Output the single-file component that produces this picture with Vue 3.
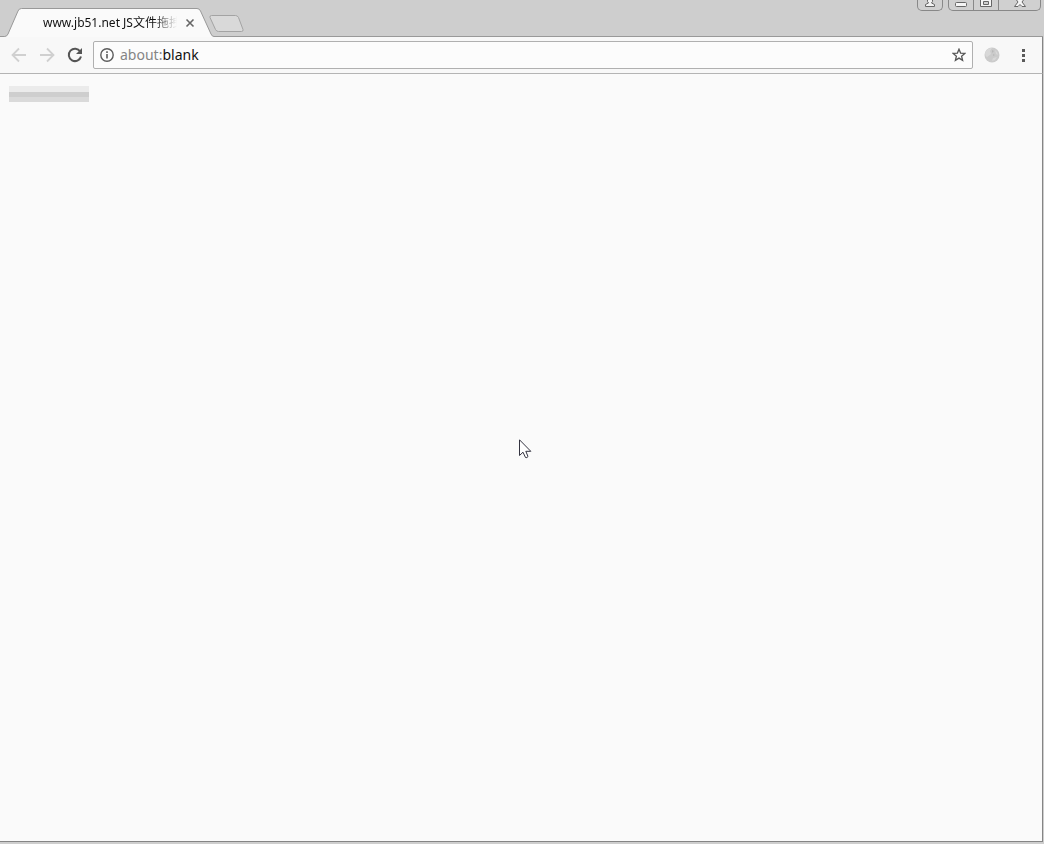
<script setup>
import { ref } from 'vue'
const address = ref('about:blank')
</script>

<template>
  <div class="desktop">
    <div class="window">
      <header class="titlebar">
        <div class="tab">
          <svg class="tab-shape" width="214" height="29" viewBox="0 0 214 29" aria-hidden="true">
            <path d="M0 28.500H4.500Q7 28.500 8 26L18 3Q19 .5 21.500 .5H197Q199.500 .5 200.500 3L211 26Q212 28.500 214 28.500V29H0Z" fill="#fafafa" />
            <path d="M0 28.500H4.500Q7 28.500 8 26L18 3Q19 .5 21.500 .5H197Q199.500 .5 200.500 3L211 26Q212 28.500 214 28.500" fill="none" stroke="#999" />
          </svg>
          <span class="tab-title">www.jb51.net JS文件拖拽</span>
          <button class="tab-close" aria-label="Close tab">
            <svg width="10" height="10" viewBox="0 0 10 10"><path d="M1.500 1.500 8.500 8.500M8.500 1.500 1.500 8.500" stroke="#666" stroke-width="1.600" /></svg>
          </button>
        </div>
        <button class="new-tab" aria-label="New tab">
          <svg width="36" height="18" viewBox="0 0 36 18"><path d="M2.500 .5H26.500Q28.500 .5 29.500 2.500L34 14.500Q34.500 16.500 32.500 16.500H9.500Q7.500 16.500 6.500 14.500L1 2.500Q.5 .5 2.500 .5Z" fill="#d9d9d9" stroke="#a3a3a3" /></svg>
        </button>
        <div class="controls">
          <button class="control user" aria-label="User">
            <svg width="12" height="9" viewBox="0 0 12 9"><path d="M3.500 0V1.500L4.500 3 1.500 4.500V6.500H10.500V4.500L7.500 3 8.500 1.500V0" fill="#f2f2f2" stroke="#666" /></svg>
          </button>
          <div class="group">
            <button class="control min" aria-label="Minimize">
              <svg width="12" height="9" viewBox="0 0 12 9"><rect x=".5" y="2.500" width="11" height="4" rx="1" fill="#f5f5f5" stroke="#666" /></svg>
            </button>
            <button class="control max" aria-label="Maximize">
              <svg width="12" height="9" viewBox="0 0 12 9"><path d="M.5 0V6.500H11.500V0" fill="#f5f5f5" stroke="#666" /><path d="M3.500 1.500H8.500V4.500H3.500Z" fill="#d0d0d0" stroke="#666" /></svg>
            </button>
            <button class="control close" aria-label="Close">
              <svg width="12" height="9" viewBox="0 0 12 9"><path d="M2.500 0 4 2 .5 6.500H4L6 4.500 8 6.500H11.500L8 2 9.500 0" fill="#f5f5f5" stroke="#666" /></svg>
            </button>
          </div>
        </div>
      </header>
      <nav class="toolbar">
        <button class="tool" aria-label="Back" disabled>
          <svg width="16" height="16" viewBox="0 0 16 16"><path d="M15 8H2M8 1.500 1.500 8 8 14.500" fill="none" stroke="#d0d0d0" stroke-width="1.800" /></svg>
        </button>
        <button class="tool" aria-label="Forward" disabled>
          <svg width="16" height="16" viewBox="0 0 16 16"><path d="M1 8H14M8 1.500 14.500 8 8 14.500" fill="none" stroke="#d0d0d0" stroke-width="1.800" /></svg>
        </button>
        <button class="tool" aria-label="Reload">
          <svg width="16" height="16" viewBox="0 0 16 16"><path d="M13.200 4.500A6.200 6.200 0 1 0 14 9.500" fill="none" stroke="#555" stroke-width="2" /><path d="M15 1V7H9Z" fill="#555" /></svg>
        </button>
        <div class="omnibox">
          <button class="info" aria-label="Site information">
            <svg width="14" height="14" viewBox="0 0 14 14"><circle cx="7" cy="7" r="6.200" fill="none" stroke="#5c5c5c" stroke-width="1.400" /><path d="M7 6V10.500M7 3.300V5" stroke="#5c5c5c" stroke-width="1.600" /></svg>
          </button>
          <div class="address">
            <span class="address-text" aria-hidden="true">about:<b>blank</b></span>
            <input v-model="address" aria-label="Address" spellcheck="false" />
          </div>
          <button class="star" aria-label="Bookmark this page">
            <svg width="14" height="14" viewBox="0 0 14 14"><path d="M7 1.200 8.600 5.100 12.900 5.400 9.600 8.200 10.600 12.300 7 10.100 3.400 12.300 4.400 8.200 1.100 5.400 5.400 5.100Z" fill="none" stroke="#555" stroke-width="1.300" /></svg>
          </button>
        </div>
        <button class="extension" aria-label="Extension">
          <svg width="16" height="16" viewBox="0 0 16 16"><circle cx="8" cy="8" r="7.500" fill="#cbcbcb" /><path d="M1 6Q3 1 8 1L6 4 7 7 3 10Q1 9 1 6ZM11 3Q14 5 14 8L12 7ZM9 11 13 10 11 13 8 14Z" fill="#d8d8d8" /><path d="M8 3 10 4 8 6ZM9 7 11 8 9 9Z" fill="#b8b8b8" /></svg>
        </button>
        <button class="menu" aria-label="Menu">
          <svg width="4" height="14" viewBox="0 0 4 14"><path d="M0 1h3v3h-3zM0 6h3v3h-3zM0 11h3v3h-3z" fill="#5a5a5a" /></svg>
        </button>
      </nav>
      <main class="page">
        <div class="drop"></div>
        <svg class="pointer" width="13" height="20" viewBox="0 0 13 20" aria-hidden="true"><path d="M.5 .8V16.500L4 13.200 6.500 18.500Q8 19.200 9 17.500L6.800 12.300H11.800Z" fill="#fff" stroke="#333340" /></svg>
      </main>
    </div>
  </div>
</template>

<style>
html, body, #app { height: 100%; }
</style>

<style scoped>
.desktop { box-sizing: border-box; height: 100%; padding: 0 2px 2px 0; background: #fff; }
.window { box-sizing: border-box; height: 100%; display: flex; flex-direction: column; background: #cecece; padding: 0 1px 2px 0; font-family: "Noto Sans", "Noto Sans CJK SC", sans-serif; overflow: hidden; }
button { padding: 0; border: 0; background: none; display: flex; align-items: center; justify-content: center; flex: none; }
svg { display: block; }
.titlebar { height: 37px; box-sizing: border-box; flex: none; display: flex; align-items: flex-end; border-bottom: 1px solid #999; }
.tab { position: relative; width: 214px; height: 29px; margin-bottom: -1px; box-sizing: border-box; display: flex; align-items: center; padding-left: 43px; flex: none; background: linear-gradient(#fafafa, #fafafa) 7px 100% / 204px 1px no-repeat; }
.tab-shape { position: absolute; left: 0; top: 0; }
.tab-title { position: relative; width: 134px; overflow: hidden; white-space: nowrap; font-size: 12px; line-height: 20px; color: #111; mask-image: linear-gradient(90deg, #000 112px, transparent 134px); }
.tab-close { position: relative; width: 10px; height: 20px; margin-left: 8px; }
.new-tab { margin: 0 0 3px -5px; }
.controls { margin-left: auto; align-self: flex-start; display: flex; gap: 5px; margin-right: 2px; }
.control { height: 11px; box-sizing: border-box; align-items: flex-start; border: 1px solid #888; border-top: 0; background: #d0d0d0; }
.user { width: 26px; border-radius: 0 0 5px 5px; }
.group { display: flex; }
.min { width: 26px; border-radius: 0 0 0 5px; }
.max { width: 25px; border-left: 0; }
.close { width: 42px; border-left: 0; border-radius: 0 0 5px 0; }
.toolbar { height: 37px; box-sizing: border-box; flex: none; display: flex; align-items: center; background: #f8f8f8; border-right: 1px solid #858585; border-bottom: 1px solid #b4b4b4; padding: 0 16px 0 5px; }
.tool { width: 28px; height: 28px; }
.omnibox { flex: 1; height: 28px; box-sizing: border-box; margin-left: 4px; border: 1px solid #b0b0b0; border-radius: 2px; background: #fcfcfc; display: flex; align-items: center; padding: 0 6px; }
.address { position: relative; flex: 1; margin-left: 6px; height: 24px; font-size: 14px; line-height: 24px; }
.address-text { position: absolute; inset: 0; color: #858585; pointer-events: none; }
.address-text b { font-weight: 400; color: #111; }
.address input { width: 100%; height: 24px; padding: 0; border: 0; outline: 0; background: transparent; font: inherit; color: transparent; caret-color: #111; }
.extension { margin-left: 11px; }
.menu { margin-left: 22px; }
.page { position: relative; flex: 1; background: #fafafa; border-right: 1px solid #858585; border-bottom: 1px solid #858585; padding: 12px 9px; }
.drop { width: 80px; height: 16px; background: linear-gradient(#ebebeb 6px, #cecece 6px 11px, #dadada 11px); }
.pointer { position: absolute; left: 519px; top: 365px; }
</style>
